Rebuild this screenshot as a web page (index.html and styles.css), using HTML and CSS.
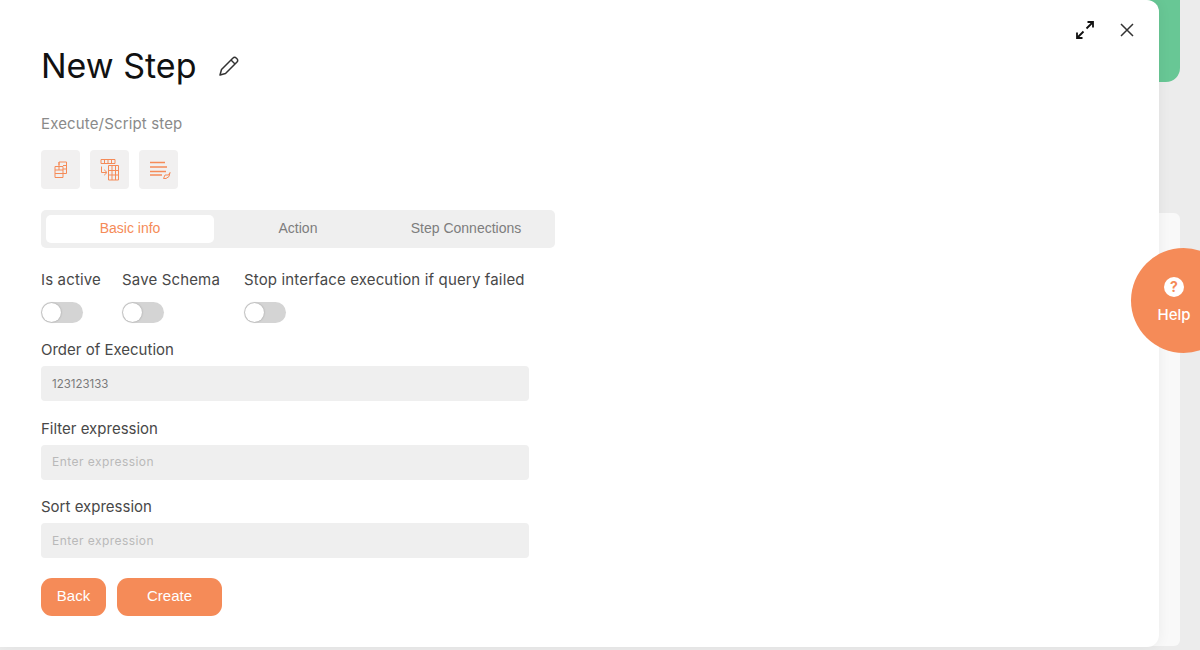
FILE: index.html
```html
<!DOCTYPE html>
<html lang="en">
  <head>
    <meta charset="UTF-8" />
    <title>New Step</title>
    <link rel="stylesheet" href="styles.css">
  </head>
  <body>
    <div class="Backdrop">
      <div class="GreenCard"></div>
      <div class="WhiteCard"></div>
    </div>
    <main class="Modal">
      <div class="ModalActions">
        <button class="IconButton" aria-label="Expand">
          <svg width="20" height="20" viewBox="0 0 20 20" fill="none" stroke="#111" stroke-width="1.8">
            <path d="M2 18 8.500 11.500M2 12.500V18H7.500M18 2 11.500 8.500M12.500 2H18V7.500" />
          </svg>
        </button>
        <button class="IconButton" aria-label="Close">
          <svg width="14" height="14" viewBox="0 0 14 14" fill="none" stroke="#333" stroke-width="1.5">
            <path d="M1 1 13 13M13 1 1 13" />
          </svg>
        </button>
      </div>

      <div class="Title">
        <h1>New Step</h1>
        <svg width="22" height="22" viewBox="0 0 22 22" fill="none" stroke="#333" stroke-width="1.5" stroke-linejoin="round">
          <path d="M2 20 3.500 14.500 15 3a2.200 2.200 0 0 1 3.200 0l.8.8a2.200 2.200 0 0 1 0 3.200L7.500 18.500Z" />
          <path d="M13 5 17 9" />
        </svg>
      </div>
      <p class="Subtitle">Execute/Script step</p>

      <div class="Tools">
        <button class="Tool" aria-label="Copy">
          <svg width="14" height="18" viewBox="0 0 14 18" fill="none" stroke="#f58b58" stroke-width="1">
            <path d="M5 4V1H12.500V12.500H9" />
            <path d="M1 5.500H9V16.500H1ZM1 9H9M1 12.500H9M5 5.500V1M5 9V5.500M9 4.500H12.500M9 8H12.500" />
          </svg>
        </button>
        <button class="Tool" aria-label="Table">
          <svg width="20" height="22" viewBox="0 0 20 22" fill="none" stroke="#f58b58" stroke-width="1">
            <path d="M1 .5H15V4.500H1ZM4.500 .5V4.500M8 .5V4.500M11.500 .5V4.500" />
            <path d="M8.500 6.500H18.500V21H8.500ZM8.500 11.500H18.500M8.500 16H18.500M12 6.500V21M15.500 6.500V21" />
            <path d="M1.500 7.500V13.500H6.500M4.200 10.800 7 13.500 4.200 16.200" />
          </svg>
        </button>
        <button class="Tool" aria-label="Write">
          <svg width="24" height="18" viewBox="0 0 24 18" fill="none" stroke="#f58b58" stroke-width="1.400">
            <path d="M3 1.500H18M3 6H20M3 10.500H19M3 14H15" />
            <path d="M16.500 17.500 18 14H21.500L23 11.500 22 15.500 19 17.500Z" stroke-width="1" />
          </svg>
        </button>
      </div>

      <div class="Tabs">
        <button class="Tab Tab--active">Basic info</button>
        <button class="Tab">Action</button>
        <button class="Tab">Step Connections</button>
      </div>

      <div class="Switches">
        <label class="Switch">
          <span>Is active</span>
          <i class="SwitchTrack"></i>
        </label>
        <label class="Switch">
          <span>Save Schema</span>
          <i class="SwitchTrack"></i>
        </label>
        <label class="Switch">
          <span>Stop interface execution if query failed</span>
          <i class="SwitchTrack"></i>
        </label>
      </div>

      <label class="Field">
        <span>Order of Execution</span>
        <input type="text" value="123123133" />
      </label>
      <label class="Field">
        <span>Filter expression</span>
        <input type="text" placeholder="Enter expression" />
      </label>
      <label class="Field">
        <span>Sort expression</span>
        <input type="text" placeholder="Enter expression" />
      </label>

      <div class="Buttons">
        <button class="Button Button--back">Back</button>
        <button class="Button Button--create">Create</button>
      </div>
    </main>

    <button class="Help">
      <span class="HelpIcon">?</span>
      <span>Help</span>
    </button>
  </body>
</html>
```

FILE: styles.css
```css
:root {
  --color-accent: #f58b58;
  --color-field: #efefef;
  --color-text: #484848;
  --font-main: "Inter", "Open Sans", sans-serif;
  --font-ui: "Liberation Sans", Arial, sans-serif;
}

html,
body {
  margin: 0;
  height: 650px;
  overflow: hidden;
}

body {
  position: relative;
  background-color: #ececec;
  font-family: var(--font-main);
  color: var(--color-text);
}

button {
  border: 0;
  padding: 0;
  background: none;
  font: inherit;
}

.Backdrop {
  position: absolute;
  inset: 0 0 0 auto;
  width: 60px;
}

.GreenCard {
  position: absolute;
  top: -10px;
  left: 0;
  width: 40px;
  height: 92px;
  border-radius: 0 0 14px 0;
  background-color: #68c795;
}

.WhiteCard {
  position: absolute;
  top: 213px;
  bottom: 4px;
  left: 0;
  width: 40px;
  border-radius: 0 6px 6px 0;
  background-color: #f9f9f9;
}

.Modal {
  position: relative;
  box-sizing: border-box;
  width: 1159px;
  height: 647px;
  padding: 44px 41px 0;
  border-radius: 0 12px 12px 0;
  background-color: #fff;
  box-shadow: 0 0 14px rgba(0, 0, 0, 0.06);
}

.ModalActions {
  position: absolute;
  top: 20px;
  right: 25px;
  display: flex;
  align-items: center;
  gap: 25px;
}

.IconButton {
  display: flex;
}

.Title {
  display: flex;
  align-items: center;
  gap: 22px;
  height: 44px;
}

h1 {
  margin: 0 0 2px;
  font-size: 34px;
  font-weight: 400;
  color: #111;
}

.Subtitle {
  margin: 25px 0 0;
  font-size: 15px;
  line-height: 22px;
  letter-spacing: 0.15px;
  color: #8a8a8a;
}

.Tools {
  display: flex;
  gap: 10px;
  margin-top: 15px;
}

.Tool {
  display: flex;
  align-items: center;
  justify-content: center;
  width: 39px;
  height: 39px;
  border-radius: 4px;
  background-color: #f1f0f0;
}

.Tabs {
  display: flex;
  box-sizing: border-box;
  width: 514px;
  height: 38px;
  margin-top: 21px;
  padding: 5px;
  border-radius: 5px;
  background-color: #efefef;
}

.Tab {
  flex: 0 0 168px;
  padding-bottom: 2px;
  border-radius: 5px;
  font-family: var(--font-ui);
  font-size: 14px;
  color: #7d7d7d;
}

.Tab--active {
  background-color: #fff;
  color: var(--color-accent);
}

.Switches {
  display: grid;
  grid-template-columns: 60px 101px auto;
  gap: 21px;
  margin-top: 21px;
}

.Switch {
  display: flex;
  flex-direction: column;
  align-items: flex-start;
  gap: 11px;
  font-size: 15px;
  line-height: 22px;
  letter-spacing: 0.15px;
  white-space: nowrap;
}

.SwitchTrack {
  position: relative;
  display: block;
  width: 42px;
  height: 21px;
  border-radius: 11px;
  background-color: #d4d4d4;
}

.SwitchTrack::after {
  content: "";
  position: absolute;
  top: 1px;
  left: 1px;
  width: 19px;
  height: 19px;
  border-radius: 50%;
  background-color: #fff;
  box-shadow: 0 0 2px rgba(0, 0, 0, 0.3);
}

.Field {
  display: block;
  width: 488px;
  margin-top: 16.4px;
  font-size: 15px;
  line-height: 22px;
}

.Field span {
  display: block;
  margin-bottom: 5px;
}

.Field input {
  display: block;
  box-sizing: border-box;
  width: 100%;
  height: 35px;
  padding: 0 11px;
  border: 0;
  border-radius: 4px;
  outline: 0;
  background-color: var(--color-field);
  font-family: var(--font-main);
  font-size: 11.5px;
  color: #7a7a7a;
}

.Field input::placeholder {
  font-size: 12px;
  letter-spacing: 0.45px;
  color: #b9b9b9;
  opacity: 1;
}

.Buttons {
  display: flex;
  gap: 11px;
  margin-top: 20px;
}

.Button {
  height: 38px;
  padding-bottom: 3px;
  border-radius: 11px;
  background-color: var(--color-accent);
  font-family: var(--font-ui);
  font-size: 15px;
  color: #fff;
}

.Button--back {
  width: 65px;
}

.Button--create {
  width: 105px;
}

.Help {
  position: absolute;
  top: 248px;
  left: 1131px;
  display: flex;
  flex-direction: column;
  align-items: center;
  box-sizing: border-box;
  width: 105px;
  height: 105px;
  padding: 29px 19px 0 0;
  border-radius: 50%;
  background-color: var(--color-accent);
  font-family: var(--font-main);
  font-size: 15px;
  font-weight: 500;
  line-height: 22px;
  color: #fff;
}

.HelpIcon {
  display: flex;
  align-items: center;
  justify-content: center;
  width: 20px;
  height: 20px;
  margin-bottom: 7px;
  border-radius: 50%;
  background-color: #fff;
  font-size: 14px;
  font-weight: 700;
  color: var(--color-accent);
}
```
